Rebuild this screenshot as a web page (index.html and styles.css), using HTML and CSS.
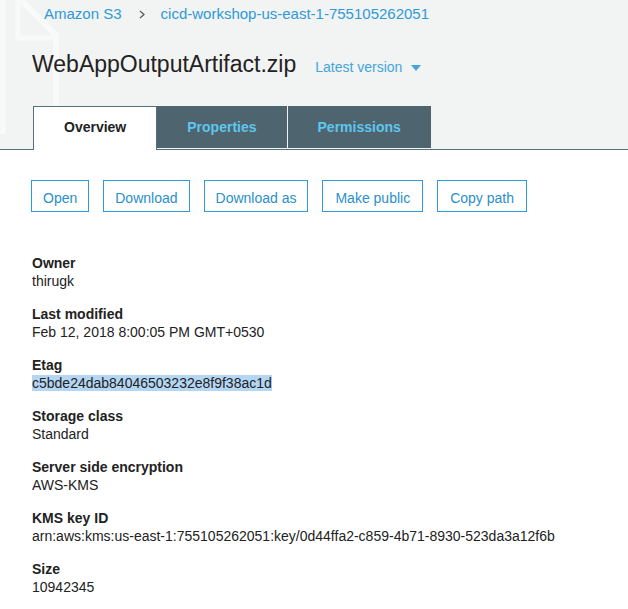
FILE: index.html
```html
<!DOCTYPE html>
<html lang="en">
<head>
<meta charset="utf-8">
<title>WebAppOutputArtifact.zip</title>
<link rel="stylesheet" href="styles.css">
</head>
<body>
<header class="head">
  <svg class="watermark" width="70" height="150" viewBox="0 0 70 150" aria-hidden="true">
    <path d="M3 -5 V134" fill="none" stroke="#f8f9f9" stroke-width="5"/>
    <path d="M18 -3 L56 35 V134" fill="none" stroke="#f8f9f9" stroke-width="6"/>
    <path d="M18 -3 V38 H56" fill="none" stroke="#f8f9f9" stroke-width="5"/>
  </svg>
  <nav class="crumbs">
    <a class="crumb">Amazon S3</a>
    <svg class="sep" width="6" height="9" viewBox="0 0 6 9" aria-hidden="true"><path d="M1 1 L5 4.5 L1 8" fill="none" stroke="#555" stroke-width="1.2"/></svg>
    <a class="crumb">cicd-workshop-us-east-1-755105262051</a>
  </nav>
  <div class="title-row">
    <h1 class="title">WebAppOutputArtifact.zip</h1>
    <span class="version">Latest version
      <svg class="caret" width="10" height="6" viewBox="0 0 10 6" aria-hidden="true"><path d="M0 0 H10 L5 6 Z" fill="#44a6dc"/></svg>
    </span>
  </div>
  <div class="tabs">
    <div class="tab tab-active">Overview</div>
    <div class="tab">Properties</div>
    <div class="tab">Permissions</div>
  </div>
</header>
<main class="content">
  <div class="actions">
    <button class="btn">Open</button>
    <button class="btn">Download</button>
    <button class="btn">Download as</button>
    <button class="btn btn-wide">Make public</button>
    <button class="btn btn-wide">Copy path</button>
  </div>
  <dl class="props">
    <div class="prop"><dt>Owner</dt><dd>thirugk</dd></div>
    <div class="prop"><dt>Last modified</dt><dd>Feb 12, 2018 8:00:05 PM GMT+0530</dd></div>
    <div class="prop"><dt>Etag</dt><dd><span class="sel">c5bde24dab84046503232e8f9f38ac1d</span></dd></div>
    <div class="prop"><dt>Storage class</dt><dd>Standard</dd></div>
    <div class="prop"><dt>Server side encryption</dt><dd>AWS-KMS</dd></div>
    <div class="prop"><dt>KMS key ID</dt><dd>arn:aws:kms:us-east-1:755105262051:key/0d44ffa2-c859-4b71-8930-523da3a12f6b</dd></div>
    <div class="prop"><dt>Size</dt><dd>10942345</dd></div>
  </dl>
</main>
</body>
</html>
```
FILE: styles.css
```css
* { box-sizing: border-box; }
html, body {
  margin: 0;
  padding: 0;
  background: #ffffff;
  font-family: "Liberation Sans", Arial, Helvetica, sans-serif;
  color: #222;
}
.head {
  position: relative;
  background: #f2f3f3;
  border-bottom: 1px solid #56707c;
  height: 150px;
}
.watermark {
  position: absolute;
  left: 0;
  top: 0;
}
.crumbs {
  position: relative;
  display: flex;
  align-items: center;
  padding-left: 44px;
  height: 28px;
  line-height: 28px;
  font-size: 15px;
}
.crumb {
  color: #2e9ad6;
  text-decoration: none;
}
.sep {
  margin: 0 16px 0 17px;
}
.title-row {
  position: relative;
  display: flex;
  align-items: baseline;
  margin-top: 21px;
  padding-left: 32px;
  height: 30px;
}
.title {
  margin: 0;
  font-size: 23px;
  font-weight: normal;
  line-height: 30px;
  color: #222;
}
.version {
  margin-left: 19px;
  font-size: 14px;
  color: #44a6dc;
}
.caret {
  margin-left: 5px;
  vertical-align: 1px;
}
.tabs {
  position: relative;
  display: flex;
  margin-top: 27px;
  padding-left: 33px;
  height: 42px;
}
.tab {
  height: 42px;
  line-height: 42px;
  padding: 0 30px;
  font-size: 14px;
  font-weight: bold;
  background: #4e6570;
  color: #5ec6ee;
  margin-right: 1px;
}
.tab-active {
  background: #ffffff;
  color: #222;
  border: 1px solid #56707c;
  border-bottom: none;
  height: 44px;
  line-height: 41px;
  margin-right: 0;
}
.content {
  padding: 30px 0 0 31px;
}
.actions {
  display: flex;
  gap: 14px;
}
.btn {
  height: 32px;
  padding: 4px 11px 0;
  line-height: 26px;
  background: #ffffff;
  border: 1px solid #2d9bd7;
  border-radius: 0;
  color: #2a8fcc;
  font-family: inherit;
  font-size: 14px;
}
.btn-wide {
  padding: 4px 12px 0;
}
.props {
  margin: 42px 0 0 1px;
}
.prop {
  margin-bottom: 15px;
  font-size: 14px;
  line-height: 18px;
}
.prop dt {
  font-weight: bold;
  color: #222;
}
.prop dd {
  margin: 0;
  color: #222;
}
.sel {
  background: #b4d6f5;
}
```
